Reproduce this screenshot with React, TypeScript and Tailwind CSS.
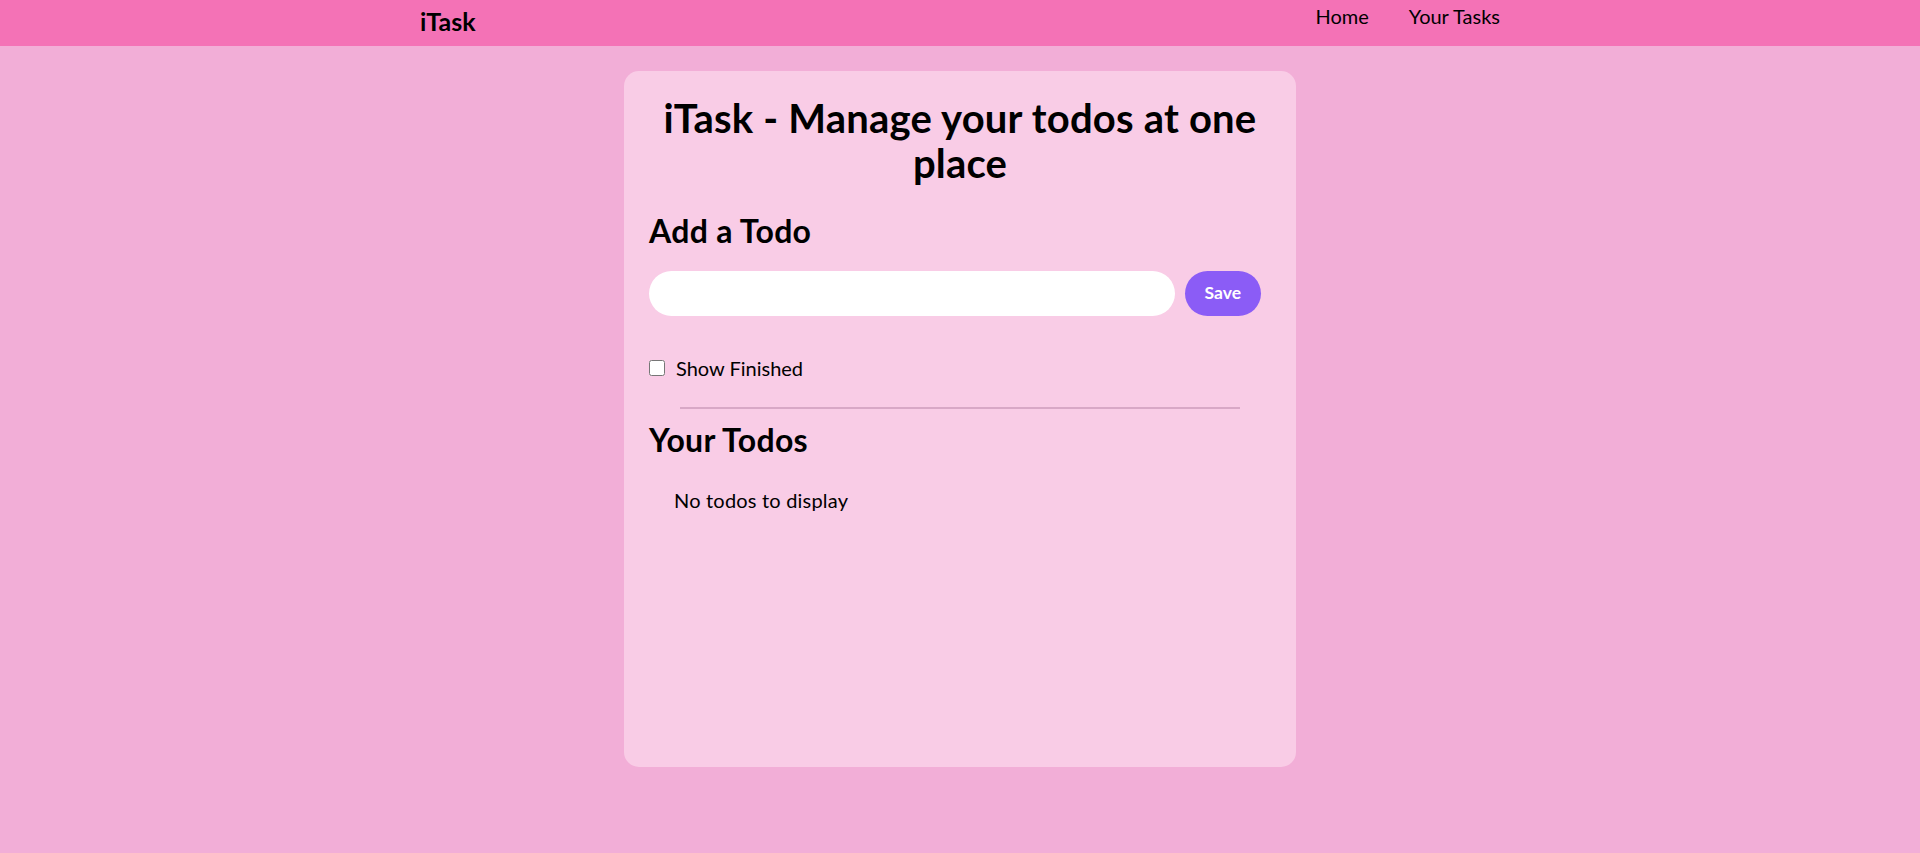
import { useState } from 'react';

type Todo = { id: number; todo: string; isCompleted: boolean };

function Navbar() {
  return (
    <nav className="flex justify-around bg-[#f472b6] h-[46px] text-black">
      <div className="pt-[4px]">
        <span className="font-bold text-[25px] leading-[35px]">iTask</span>
      </div>
      <ul className="flex gap-[40px] pt-[1px]">
        <li className="cursor-pointer text-[20px] leading-[30px] hover:font-bold">Home</li>
        <li className="cursor-pointer text-[20px] leading-[30px] hover:font-bold">Your Tasks</li>
      </ul>
    </nav>
  );
}

export default function App() {
  const [todo, setTodo] = useState('');
  const [todos, setTodos] = useState<Todo[]>([]);
  const [showFinished, setShowFinished] = useState(false);

  const handleAdd = () => {
    if (todo.trim().length < 1) return;
    setTodos([...todos, { id: Date.now(), todo, isCompleted: false }]);
    setTodo('');
  };

  const visible = todos.filter((t) => showFinished || !t.isCompleted);

  return (
    <div
      className="min-h-screen bg-[#f2aed7] text-black"
      style={{ fontFamily: 'Lato, "Noto Sans", sans-serif' }}
    >
      <Navbar />
      <div className="mx-auto my-[25px] w-[672px] min-h-[696px] rounded-[15px] bg-[#f9cce6] p-[25px]">
        <h1 className="text-center font-bold text-[40px] leading-[45px] tracking-[0.2px]">
          iTask - Manage your todos at one place
        </h1>

        <div className="mt-[25px] flex flex-col gap-[20px]">
          <h2 className="font-bold text-[32px] leading-[40px] tracking-[0.3px]">Add a Todo</h2>
          <div className="flex">
            <input
              type="text"
              value={todo}
              onChange={(e) => setTodo(e.target.value)}
              className="w-full h-[45px] rounded-full bg-white px-[20px] py-[5px] text-[20px] outline-none"
            />
            <button
              onClick={handleAdd}
              className="mx-[10px] h-[45px] rounded-full bg-[#8b5cf6] px-[20px] text-[17.5px] font-bold text-white hover:bg-violet-700"
            >
              Save
            </button>
          </div>
        </div>

        <label className="mt-[37px] flex items-center gap-[11px] text-[20px] leading-[30px]">
          <input
            type="checkbox"
            checked={showFinished}
            onChange={() => setShowFinished(!showFinished)}
            className="h-[16px] w-[16px]"
          />
          Show Finished
        </label>

        <div className="mx-auto mt-[24px] h-[2px] w-[90%] bg-[#d8a8c6]" />

        <h2 className="mt-[11px] font-bold text-[32px] leading-[40px] tracking-[0.3px]">Your Todos</h2>

        <div>
          {visible.length === 0 && (
            <div className="m-[25px] text-[20px] leading-[30px] tracking-[0.2px]">No todos to display</div>
          )}
          {visible.map((item) => (
            <div key={item.id} className="my-[10px] flex w-full justify-between">
              <div className="flex gap-[20px]">
                <input
                  type="checkbox"
                  checked={item.isCompleted}
                  onChange={() =>
                    setTodos(todos.map((t) => (t.id === item.id ? { ...t, isCompleted: !t.isCompleted } : t)))
                  }
                />
                <div className={item.isCompleted ? 'line-through' : ''}>{item.todo}</div>
              </div>
            </div>
          ))}
        </div>
      </div>
    </div>
  );
}
